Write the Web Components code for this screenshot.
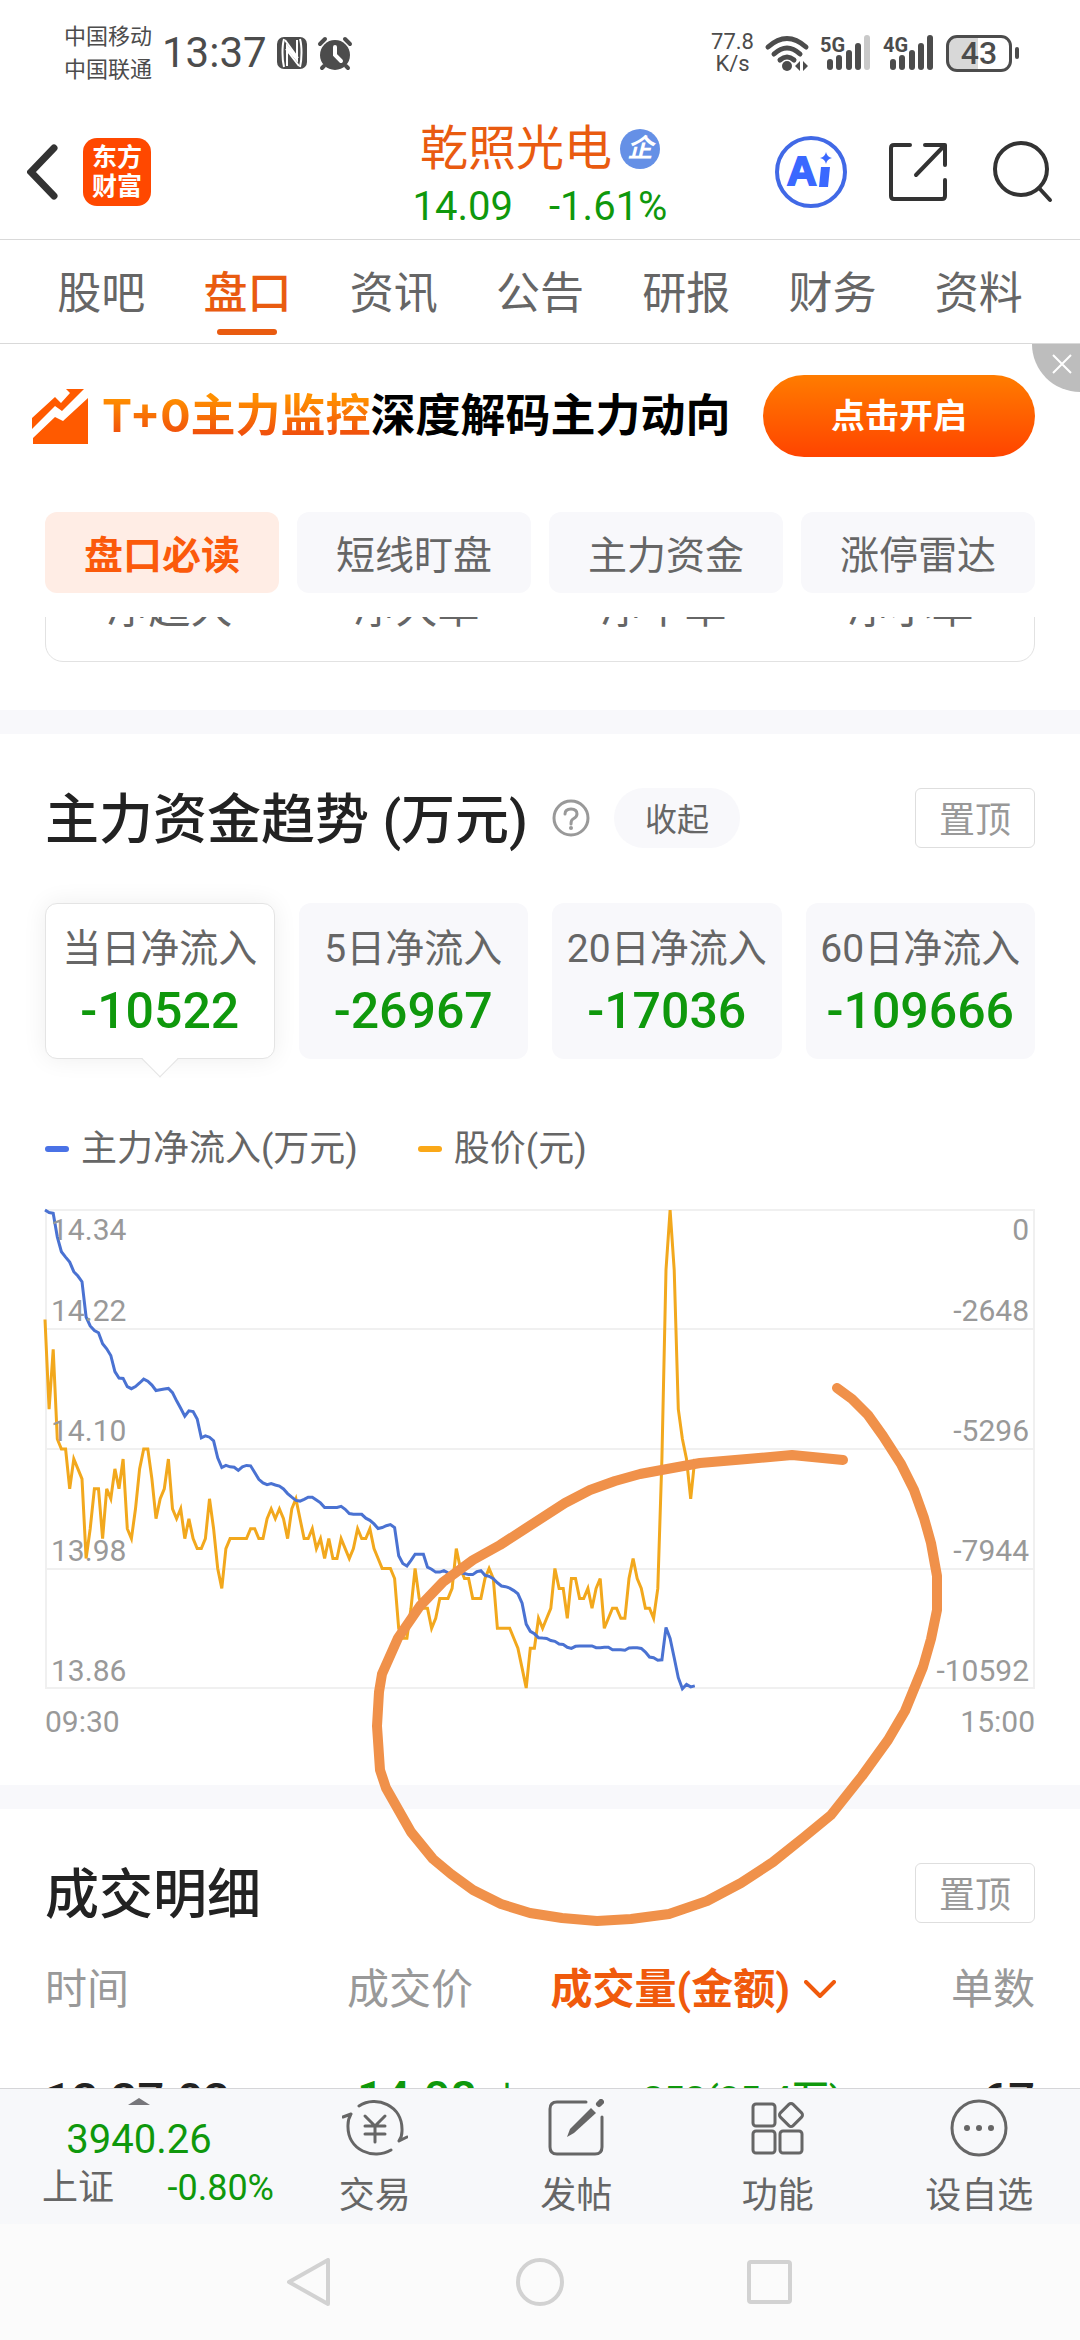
<!DOCTYPE html>
<html lang="zh-CN">
<head>
<meta charset="utf-8">
<meta name="viewport" content="width=device-width, initial-scale=1">
<title>乾照光电</title>
<style>
body {
  margin:0;
  height:100vh;
  display:flex;
  flex-direction:column;
  overflow:hidden;
  background-color:#fff;
  color:#666;
  font-family:Roboto,"Noto Sans CJK SC",sans-serif;
  --orange:#e95b10;
  --green:#0f980c;
  --ink:#222;
  --mute:#999;
  --panel:#f8f8fb;
  --rule:#d9d9d9;
  --edge:45px;
}
</style>
</head>
<body>

<status-bar></status-bar>
<stock-header name="乾照光电" price="14.09" change="-1.61%"></stock-header>
<tab-bar active="盘口" tabs="股吧,盘口,资讯,公告,研报,财务,资料"></tab-bar>
<promo-banner>
  <span slot="hot">T+0主力监控</span>
  <span slot="text">深度解码主力动向</span>
  <span slot="action">点击开启</span>
</promo-banner>
<chip-nav active="盘口必读" chips="盘口必读,短线盯盘,主力资金,涨停雷达"></chip-nav>

<scroll-view>
  <order-card labels="净超大,净大单,净中单,净小单"></order-card>
  <page-section heading="主力资金趋势 (万元)" foldable>
    <stat-row>
      <stat-card label="当日净流入" active>-10522</stat-card>
      <stat-card label="5日净流入">-26967</stat-card>
      <stat-card label="20日净流入">-17036</stat-card>
      <stat-card label="60日净流入">-109666</stat-card>
    </stat-row>
    <flow-chart></flow-chart>
  </page-section>
  <page-section heading="成交明细">
    <trade-table></trade-table>
  </page-section>
  <pen-mark></pen-mark>
</scroll-view>

<bottom-bar></bottom-bar>
<system-nav></system-nav>

<script>
class ShadowElement extends HTMLElement {
  constructor() {
    super();
    this.attachShadow({mode: 'open'});
  }
  connectedCallback() {
    const template = document.createElement('template');
    template.innerHTML = this.render();
    this.shadowRoot.appendChild(template.content.cloneNode(true));
  }
  list(name) {
    return this.getAttribute(name).split(',');
  }
}

/* Status Bar */

class StatusBar extends ShadowElement {
  signal(label, weak) {
    return `
    <svg width="52" height="36" viewBox="0 0 52 36" fill="#4c4c4c">
      <text x="0" y="17" font-size="20" font-weight="700">${label}</text>
      <rect x="7" y="24" width="6" height="11" rx="3"/>
      <rect x="16" y="20" width="6" height="15" rx="3"/>
      <rect x="26" y="15" width="6" height="20" rx="3"/>
      <rect x="35" y="8" width="6" height="27" rx="3"/>
      <rect x="44" y="0" width="6" height="35" rx="3" fill="${weak ? '#c9c9c9' : '#4c4c4c'}"/>
    </svg>`;
  }
  render() {
    return `
<style>
:host {
  display:flex;
  justify-content:space-between;
  align-items:center;
  height:106px;
  padding:0 68px 0 64px;
  color:#4c4c4c;
}
div {
  display:flex;
  align-items:center;
}
svg {
  overflow:visible;
}
.carriers {
  flex-direction:column;
  font-size:22px;
  line-height:33px;
}
.left {
  gap:10px;
}
.right {
  gap:11px;
}
time {
  font-size:42px;
  line-height:48px;
}
.speed {
  flex-direction:column;
  font-size:22px;
  line-height:22px;
}
.battery {
  position:relative;
  box-sizing:border-box;
  justify-content:center;
  width:66px;
  height:37px;
  border:3px solid #4c4c4c;
  border-radius:11px;
  background:linear-gradient(90deg,#d8d8d8 48%,#fff 48%);
  font-size:32px;
  font-weight:500;
}
.battery::after {
  content:"";
  position:absolute;
  right:-10px;
  width:4px;
  height:12px;
  border-radius:2px;
  background-color:#4c4c4c;
}
</style>
<div class="left">
  <div class="carriers"><span>中国移动</span><span>中国联通</span></div>
  <time>13:37</time>
  <svg width="30" height="32" viewBox="0 0 30 32">
    <rect width="30" height="32" rx="7" fill="#4c4c4c"/>
    <path d="M7 2C5 9 5 22 7 30M23 2C25 9 25 22 23 30" stroke="#fff" stroke-width="2" fill="none"/>
    <path d="M10 29V9L20 21M20 3V23L10 11" stroke="#fff" stroke-width="2" fill="none"/>
    <path d="M8 3L21 21M9 12L22 29" stroke="#fff" stroke-width="2"/>
  </svg>
  <svg width="36" height="35" viewBox="0 0 36 35" fill="none" stroke="#4c4c4c" stroke-width="4" stroke-linecap="round">
    <circle cx="18" cy="19" r="15" fill="#4c4c4c" stroke="none"/>
    <path d="M3 8L8 3M33 8L28 3M7 30L5 32M29 30L31 32"/>
    <path d="M18 11V19L24 25" stroke="#fff"/>
  </svg>
</div>
<div class="right">
  <div class="speed"><span>77.8</span><span>K/s</span></div>
  <svg width="44" height="36" viewBox="0 0 44 36" fill="none" stroke="#4c4c4c" stroke-width="5" stroke-linecap="round">
    <path d="M3 12Q22-5 41 12M9 19Q22 7 35 19M15 25Q22 19 29 25"/>
    <circle cx="22" cy="31" r="5" fill="#4c4c4c" stroke="none"/>
    <path d="M30 31L35 26V36ZM43 31L38 26V36Z" fill="#4c4c4c" stroke="none"/>
  </svg>
  ${this.signal('5G', true)}
  ${this.signal('4G', false)}
  <div class="battery">43</div>
</div>`;
  }
}

/* Stock Header */

class StockHeader extends ShadowElement {
  render() {
    return `
<style>
:host {
  display:grid;
  grid-template-columns:1fr auto 1fr;
  align-items:center;
  padding:14px 27px 3px;
  border-bottom:1px solid var(--rule);
}
button {
  display:flex;
  padding:0;
  border:0;
  background:none;
}
.side {
  display:flex;
  align-items:center;
  gap:25px;
  margin-bottom:12px;
}
.end {
  justify-content:flex-end;
  gap:42px;
}
.logo {
  display:flex;
  flex-direction:column;
  justify-content:center;
  align-items:center;
  width:68px;
  height:68px;
  border-radius:14px;
  background-color:#ff4800;
  color:#fff;
  font-size:25px;
  line-height:29px;
  font-weight:700;
}
h1, p {
  display:flex;
  justify-content:center;
  align-items:center;
  margin:0;
  line-height:58px;
}
h1 {
  gap:8px;
  color:var(--orange);
  font-size:48px;
  font-weight:400;
}
p {
  gap:36px;
  color:var(--green);
  font-size:40px;
}
.badge {
  width:40px;
  height:40px;
  border-radius:50%;
  background-color:#6590e6;
  color:#fff;
  font-size:26px;
  line-height:38px;
  font-weight:700;
  font-style:italic;
  text-align:center;
}
</style>
<div class="side">
  <button aria-label="返回">
    <svg width="31" height="56" viewBox="0 0 31 56" fill="none" stroke="#333" stroke-width="7" stroke-linecap="round">
      <path d="M27 4L4 28L27 52"/>
    </svg>
  </button>
  <div class="logo"><span>东方</span><span>财富</span></div>
</div>
<div>
  <h1>${this.getAttribute('name')}<span class="badge">企</span></h1>
  <p><span>${this.getAttribute('price')}</span><span>${this.getAttribute('change')}</span></p>
</div>
<div class="side end">
  <button aria-label="智能助手">
    <svg width="72" height="72" viewBox="0 0 72 72">
      <circle cx="36" cy="36" r="34" fill="none" stroke="#4169e6" stroke-width="4"/>
      <text x="12" y="49" font-size="41" font-weight="900" fill="#3a68ff" stroke="#3a68ff" stroke-width="2">A</text>
      <path d="M46 31H55L53 51H44Z" fill="#3a68ff"/>
      <path d="M51 16Q52 21 57 22Q52 23 51 28Q50 23 45 22Q50 21 51 16Z" fill="#3a68ff"/>
    </svg>
  </button>
  <button aria-label="分享">
    <svg width="58" height="60" viewBox="0 0 58 60" fill="none" stroke="#333" stroke-width="4" stroke-linecap="round" stroke-linejoin="round">
      <path d="M21 3H5Q2 3 2 6V54Q2 57 5 57H53Q56 57 56 54V38"/>
      <path d="M36 3H56V23M54 5L27 33"/>
    </svg>
  </button>
  <button aria-label="搜索">
    <svg width="64" height="64" viewBox="-4 0 64 64" fill="none" stroke="#333" stroke-width="4" stroke-linecap="round">
      <circle cx="28" cy="29" r="26"/>
      <path d="M46 48L57 60"/>
    </svg>
  </button>
</div>`;
  }
}

/* Tabs under the header */

class TabBar extends ShadowElement {
  render() {
    const active = this.getAttribute('active');
    return `
<style>
:host {
  display:block;
  padding:0 28px;
  border-bottom:1px solid var(--rule);
}
nav {
  display:grid;
  grid-template-columns:repeat(7,1fr);
}
a {
  position:relative;
  padding-top:5px;
  color:inherit;
  font-size:44px;
  line-height:98px;
  text-align:center;
  text-decoration:none;
}
.active {
  color:var(--orange);
  font-weight:500;
}
.active::after {
  content:"";
  position:absolute;
  left:50%;
  bottom:8px;
  width:60px;
  height:6px;
  margin-left:-30px;
  border-radius:3px;
  background-color:var(--orange);
}
</style>
<nav>
  ${this.list('tabs').map(tab => `<a href="#" class="${tab == active ? 'active' : ''}">${tab}</a>`).join('')}
</nav>`;
  }
}

/* Promo Banner */

class PromoBanner extends ShadowElement {
  render() {
    return `
<style>
:host {
  position:relative;
  display:flex;
  align-items:center;
  padding:31px var(--edge) 31px 31px;
  font-family:Inter,"Noto Sans CJK SC",sans-serif;
  font-size:45px;
  line-height:60px;
  font-weight:700;
  white-space:nowrap;
}
.hot {
  margin-left:14px;
  background:linear-gradient(#ff9000 20%,#f0500c 80%);
  -webkit-background-clip:text;
  background-clip:text;
  color:transparent;
}
.text {
  color:#000;
}
.action {
  width:272px;
  height:82px;
  margin-left:auto;
  padding:0;
  border:0;
  border-radius:41px;
  background:linear-gradient(#ff7c00,#ff4400);
  color:#fff;
  font:inherit;
  font-size:34px;
}
.close {
  position:absolute;
  top:0;
  right:0;
  width:48px;
  height:48px;
  padding:0 0 8px 12px;
  border:0;
  border-bottom-left-radius:48px;
  background-color:#bdbdbd;
  line-height:0;
}
</style>
<svg width="57" height="56" viewBox="0 0 57 56" fill="#ff5a00">
  <path d="M1 30L24 9L30 15L39 5L35 1H53L31 23L24 18L1 41Z"/>
  <path d="M57 10V56H2V50L24 29L32 33Z"/>
</svg>
<span class="hot"><slot name="hot"></slot></span>
<span class="text"><slot name="text"></slot></span>
<button class="action"><slot name="action"></slot></button>
<button class="close" aria-label="关闭">
  <svg width="20" height="20" viewBox="0 0 20 20" stroke="#fff" stroke-width="2">
    <path d="M1 1L19 19M19 1L1 19"/>
  </svg>
</button>`;
  }
}

/* Chips */

class ChipNav extends ShadowElement {
  render() {
    const active = this.getAttribute('active');
    return `
<style>
:host {
  display:grid;
  grid-template-columns:repeat(4,1fr);
  gap:18px;
  padding:24px var(--edge);
}
button {
  height:81px;
  padding:0 0 2px;
  border:0;
  border-radius:12px;
  background-color:var(--panel);
  color:inherit;
  font:inherit;
  font-size:39px;
}
.active {
  background-color:#ffede5;
  color:#fb5a0b;
  font-weight:700;
}
</style>
${this.list('chips').map(chip => `<button class="${chip == active ? 'active' : ''}">${chip}</button>`).join('')}`;
  }
}

/* Scrolling part of the page */

class ScrollView extends ShadowElement {
  render() {
    return `
<style>
:host {
  display:block;
  flex:1;
  min-height:0;
  overflow-y:auto;
  scrollbar-width:none;
}
main {
  position:relative;
}
</style>
<main><slot></slot></main>`;
  }
}

class OrderCard extends ShadowElement {
  render() {
    return `
<style>
:host {
  display:block;
  overflow:hidden;
  padding:0 var(--edge) 48px;
}
div {
  display:grid;
  grid-template-columns:repeat(4,1fr);
  margin-top:-61px;
  padding:28px 0;
  border:1px solid #e2e2e2;
  border-radius:18px;
  font-size:42px;
  line-height:48px;
  text-align:center;
}
</style>
<div>${this.list('labels').map(label => `<span>${label}</span>`).join('')}</div>`;
  }
}

class PageSection extends ShadowElement {
  render() {
    const fold = `
    <svg width="38" height="38" viewBox="0 0 38 38" fill="none" stroke="#999" stroke-width="3">
      <circle cx="19" cy="19" r="17"/>
      <path d="M13 15Q13 10 19 10Q25 10 25 15Q25 18 21 20Q19 21 19 25" stroke-linecap="round"/>
      <circle cx="19" cy="29" r="2" fill="#999" stroke="none"/>
    </svg>
    <button class="fold">收起</button>`;
    return `
<style>
:host {
  display:block;
  padding:54px var(--edge) 0;
  border-top:24px solid var(--panel);
}
header {
  display:flex;
  align-items:center;
  gap:24px;
  height:60px;
}
h2 {
  margin:0;
  padding-top:6px;
  color:var(--ink);
  font-size:54px;
  line-height:60px;
  font-weight:500;
}
button {
  box-sizing:border-box;
  height:60px;
  padding:0 0 2px;
  font:inherit;
}
.fold {
  width:126px;
  border:0;
  border-radius:30px;
  background-color:var(--panel);
  color:inherit;
  font-size:32px;
}
.top {
  width:120px;
  margin-left:auto;
  border:1px solid #dedede;
  border-radius:6px;
  background:none;
  color:var(--mute);
  font-size:36px;
}
</style>
<header>
  <h2>${this.getAttribute('heading')}</h2>
  ${this.hasAttribute('foldable') ? fold : ''}
  <button class="top">置顶</button>
</header>
<slot></slot>`;
  }
}

/* Net inflow cards */

class StatRow extends ShadowElement {
  render() {
    return `
<style>
:host {
  display:grid;
  grid-template-columns:repeat(4,1fr);
  gap:24px;
  margin-top:55px;
}
</style>
<slot></slot>`;
  }
}

class StatCard extends ShadowElement {
  render() {
    return `
<style>
:host {
  display:grid;
}
button {
  position:relative;
  display:flex;
  flex-direction:column;
  justify-content:center;
  align-items:center;
  height:156px;
  padding:0;
  border:1px solid transparent;
  border-radius:12px;
  background-color:var(--panel);
  color:inherit;
  font:inherit;
  white-space:nowrap;
}
.label {
  font-size:39px;
  line-height:60px;
}
.value {
  color:var(--green);
  font-size:50px;
  line-height:64px;
  font-weight:500;
}
:host([active]) button {
  border-color:#e4e4e4;
  background-color:#fff;
  box-shadow:0 0 24px rgba(0,0,0,.07);
}
:host([active]) button::after {
  content:"";
  position:absolute;
  bottom:-14px;
  width:25px;
  height:25px;
  border:solid #e4e4e4;
  border-width:0 1px 1px 0;
  background:linear-gradient(135deg,transparent 50%,#fff 50%);
  transform:rotate(45deg);
}
</style>
<button>
  <span class="label">${this.getAttribute('label')}</span>
  <span class="value"><slot></slot></span>
</button>`;
  }
}

/* Chart: one point per minute, 241 minutes in a day */

// price, in cents below 14.34
const PRICE = [
  11,20,14,23,24,24,28,25,26,27,35,32,28,28,33,28,29,26,28,25,
  32,33,30,26,24,24,27,31,29,28,25,30,31,30,33,31,33,34,34,33,
  29,32,36,38,34,33,33,33,33,33,32,32,33,33,31,30,31,30,31,33,
  30,29,31,33,33,32,34,33,35,33,35,35,33,34,35,34,32,33,33,32,
  34,35,36,36,36,37,42,43,43,40,36,39,40,40,42,41,39,39,39,38,
  34,36,37,37,39,39,39,37,36,37,42,42,42,42,43,44,46,48,44,44,
  41,42,41,40,36,38,38,41,37,37,39,39,38,40,38,37,42,41,40,40,
  41,41,37,35,37,38,40,40,41,38,25,6,0,6,20,23,25,29,25
];
// main fund outflow, 1340 steps for the whole axis
const FLOW = [
  0,7,9,75,117,132,146,173,185,201,300,325,338,344,375,389,408,453,471,472,
  495,501,495,485,474,480,491,506,504,502,500,512,535,556,578,563,565,586,639,633,
  637,647,695,722,716,720,721,730,720,716,717,736,755,765,770,767,771,774,782,795,
  805,814,816,811,805,805,813,821,834,834,834,834,831,839,851,853,853,853,864,870,
  880,893,890,885,882,890,969,991,998,982,965,965,965,1001,1007,1015,1015,1011,1017,1021,
  1017,1017,1019,1022,1022,1014,1011,1024,1027,1034,1045,1054,1056,1060,1067,1076,1102,1161,1181,1188,
  1199,1200,1201,1207,1209,1217,1218,1226,1229,1223,1222,1222,1222,1222,1227,1227,1226,1226,1233,1233,
  1233,1234,1228,1227,1227,1229,1239,1253,1255,1262,1261,1170,1201,1255,1311,1342,1330,1337,1334
];

class FlowChart extends ShadowElement {
  points(data, full) {
    return data.map((value, i) => `${(i * 987 / 240).toFixed(1)},${(1 + value * 478 / full).toFixed(1)}`).join(' ');
  }
  render() {
    const rows = [['14.22', '-2648'], ['14.10', '-5296'], ['13.98', '-7944'], ['13.86', '-10592']];
    return `
<style>
:host {
  display:block;
  padding-bottom:45px;
}
.legend {
  display:flex;
  gap:60px;
  margin:66px 0 36px;
  font-size:36px;
  line-height:48px;
}
.legend span {
  display:flex;
  align-items:center;
  gap:12px;
}
.legend span::before {
  content:"";
  width:24px;
  height:6px;
  border-radius:3px;
  background-color:#4a72e6;
}
.legend .price::before {
  background-color:#faa818;
}
.plot {
  position:relative;
  isolation:isolate;
}
svg {
  position:absolute;
  z-index:-1;
  width:100%;
  height:480px;
  overflow:visible;
}
path, polyline {
  fill:none;
  stroke-width:3;
  vector-effect:non-scaling-stroke;
}
.row {
  box-sizing:border-box;
  display:grid;
  grid-template-columns:1fr 1fr;
  align-content:space-between;
  height:120px;
  padding:3px 6px 0;
}
.row:not(:first-of-type) {
  align-content:end;
}
.row, .times {
  color:var(--mute);
  font-size:30px;
  line-height:36px;
}
.row :nth-child(even) {
  text-align:right;
}
.times {
  display:flex;
  justify-content:space-between;
  margin-top:15px;
}
</style>
<div class="legend"><span>主力净流入(万元)</span><span class="price">股价(元)</span></div>
<div class="plot">
  <svg viewBox="0 0 990 480" preserveAspectRatio="none">
    <path d="M1 1H989V479H1ZM1 120H989M1 240H989M1 360H989" stroke="#f0f0f0" style="stroke-width:2"/>
    <polyline points="${this.points(PRICE, 48)}" stroke="#f2a81d"/>
    <polyline points="${this.points(FLOW, 1340)}" stroke="#4a72d2"/>
  </svg>
  ${rows.map((row, i) => `
  <div class="row">
    ${i == 0 ? '<span>14.34</span><span>0</span>' : ''}
    <span>${row[0]}</span><span>${row[1]}</span>
  </div>`).join('')}
</div>
<div class="times"><span>09:30</span><span>15:00</span></div>`;
  }
}

/* Trades */

class TradeTable extends ShadowElement {
  render() {
    return `
<style>
:host {
  display:block;
  margin-top:37px;
}
table {
  width:100%;
  border-collapse:collapse;
  table-layout:fixed;
  white-space:nowrap;
}
th, td {
  padding:0;
  line-height:60px;
  text-align:left;
}
th {
  color:var(--mute);
  font-size:42px;
  font-weight:400;
}
td {
  padding-top:48px;
  color:var(--ink);
  font-size:47px;
  font-weight:500;
}
th:nth-child(1) {
  width:302px;
}
th:nth-child(2) {
  width:20%;
}
th:nth-child(3) {
  width:30%;
}
td:nth-child(2) {
  padding-left:10px;
}
th:nth-child(n+3), td:nth-child(n+3) {
  text-align:right;
}
button {
  display:inline-flex;
  align-items:center;
  gap:14px;
  padding:0 6px 0 0;
  border:0;
  background:none;
  color:#f05a0c;
  font:inherit;
  font-weight:700;
}
.green {
  color:var(--green);
}
.small {
  font-size:37px;
}
</style>
<table>
  <tr>
    <th>时间</th>
    <th>成交价</th>
    <th><button>成交量(金额)<svg width="32" height="20" viewBox="0 0 32 20" fill="none" stroke="#f05a0c" stroke-width="4" stroke-linecap="round" stroke-linejoin="round"><path d="M2 2L16 16L30 2"/></svg></button></th>
    <th>单数</th>
  </tr>
  <tr>
    <td>13:37:03</td>
    <td class="green">14.08 <span class="small">↓</span></td>
    <td class="green small">252(35.4万)</td>
    <td>67</td>
  </tr>
</table>`;
  }
}

/* Hand-drawn loop over the chart */

class PenMark extends ShadowElement {
  render() {
    return `
<style>
:host {
  position:absolute;
  left:370px;
  top:763px;
  pointer-events:none;
}
</style>
<svg width="580" height="550" viewBox="370 1380 580 550" fill="none" stroke="#f0914a" stroke-width="10" stroke-linecap="round" stroke-linejoin="round">
  <polyline points="837,1388 852,1399 868,1415 883,1436 901,1464 914,1490 924,1518 931,1543 937,1576 937,1610 931,1639 923,1667 905,1711 888,1740 862,1776 831,1815 803,1838 773,1862 741,1883 707,1901 669,1914 631,1919 597,1921 562,1918 530,1913 501,1904 473,1890 451,1874 433,1859 411,1832 386,1788 380,1770 377,1726 379,1692 382,1674 398,1638 420,1606 443,1582 473,1560 500,1545 565,1503 590,1490 615,1481 640,1474 667,1469 700,1463 747,1459 792,1455 843,1460"/>
</svg>`;
  }
}

/* Bottom Bar */

class BottomBar extends ShadowElement {
  render() {
    return `
<style>
:host {
  display:grid;
  grid-template-columns:274px repeat(4,1fr);
  height:135px;
  border-top:1px solid #d5d5d8;
  background-color:#f7f8fa;
  font-size:36px;
  line-height:48px;
}
.index {
  display:flex;
  flex-direction:column;
  align-items:center;
  padding:9px 0 0 4px;
}
.index div {
  display:flex;
  align-self:stretch;
  justify-content:space-between;
  padding-left:38px;
}
.index span {
  color:var(--green);
}
.index .last {
  margin-top:11px;
  font-size:40px;
}
button {
  display:flex;
  flex-direction:column;
  align-items:center;
  gap:15px;
  padding:10px 0 0;
  border:0;
  background:none;
  color:inherit;
  font:inherit;
}
svg {
  flex:none;
}
</style>
<div class="index">
  <svg width="22" height="7" viewBox="0 0 22 7"><path d="M0 7L11 0L22 7Z" fill="#77777b"/></svg>
  <span class="last">3940.26</span>
  <div>上证<span>-0.80%</span></div>
</div>
<button>
  <svg width="66" height="58" viewBox="0 0 66 58" fill="none" stroke="#666" stroke-width="3" stroke-linecap="round" stroke-linejoin="round">
    <path d="M17 7C34-4 61 6 60 32Q60 38 57 42L65 38"/>
    <path d="M49 51C32 61 5 52 6 26Q6 20 9 15L1 18"/>
    <path d="M23 17L33 27L43 17M33 27V43M23 27H43M23 35H43"/>
  </svg>
  交易
</button>
<button>
  <svg width="56" height="58" viewBox="0 0 56 58" fill="none" stroke="#666" stroke-width="3" stroke-linecap="round">
    <path d="M38 3H9Q2 3 2 10V48Q2 55 9 55H47Q54 55 54 48V18"/>
    <path d="M51 5L53 3" stroke-width="6"/>
    <path d="M43 9L48 14L26 34L19 38L22 30Z" fill="#666" stroke="none"/>
  </svg>
  发帖
</button>
<button>
  <svg width="54" height="58" viewBox="0 0 54 58" fill="none" stroke="#666" stroke-width="3">
    <rect x="2" y="5" width="22" height="22" rx="3"/>
    <rect x="2" y="32" width="22" height="22" rx="3"/>
    <rect x="29" y="32" width="22" height="22" rx="3"/>
    <rect x="31" y="7" width="18" height="18" rx="3" transform="rotate(45 40 16)"/>
  </svg>
  功能
</button>
<button>
  <svg width="58" height="58" viewBox="0 0 58 58" fill="#666">
    <circle cx="29" cy="29" r="27" fill="none" stroke="#666" stroke-width="3"/>
    <circle cx="17" cy="29" r="3"/><circle cx="29" cy="29" r="3"/><circle cx="41" cy="29" r="3"/>
  </svg>
  设自选
</button>`;
  }
}

class SystemNav extends ShadowElement {
  render() {
    return `
<style>
:host {
  display:flex;
  justify-content:center;
  align-items:center;
  gap:182px;
  height:116px;
  background-color:#fbfbfb;
}
button {
  display:flex;
  padding:0;
  border:0;
  background:none;
}
svg {
  fill:none;
  stroke:#d2d2d2;
  stroke-width:4px;
  stroke-linejoin:round;
}
</style>
<button aria-label="后退"><svg width="48" height="48" viewBox="0 0 48 48"><path d="M3 24L42 2V46Z"/></svg></button>
<button aria-label="主页"><svg width="48" height="48" viewBox="0 0 48 48"><circle cx="24" cy="24" r="22"/></svg></button>
<button aria-label="最近任务"><svg width="48" height="48" viewBox="0 0 48 48"><rect x="3" y="4" width="41" height="40" rx="2"/></svg></button>`;
  }
}

customElements.define('status-bar',StatusBar);
customElements.define('stock-header',StockHeader);
customElements.define('tab-bar',TabBar);
customElements.define('promo-banner',PromoBanner);
customElements.define('chip-nav',ChipNav);
customElements.define('scroll-view',ScrollView);
customElements.define('order-card',OrderCard);
customElements.define('page-section',PageSection);
customElements.define('stat-row',StatRow);
customElements.define('stat-card',StatCard);
customElements.define('flow-chart',FlowChart);
customElements.define('trade-table',TradeTable);
customElements.define('pen-mark',PenMark);
customElements.define('bottom-bar',BottomBar);
customElements.define('system-nav',SystemNav);
</script>
</body>
</html>
